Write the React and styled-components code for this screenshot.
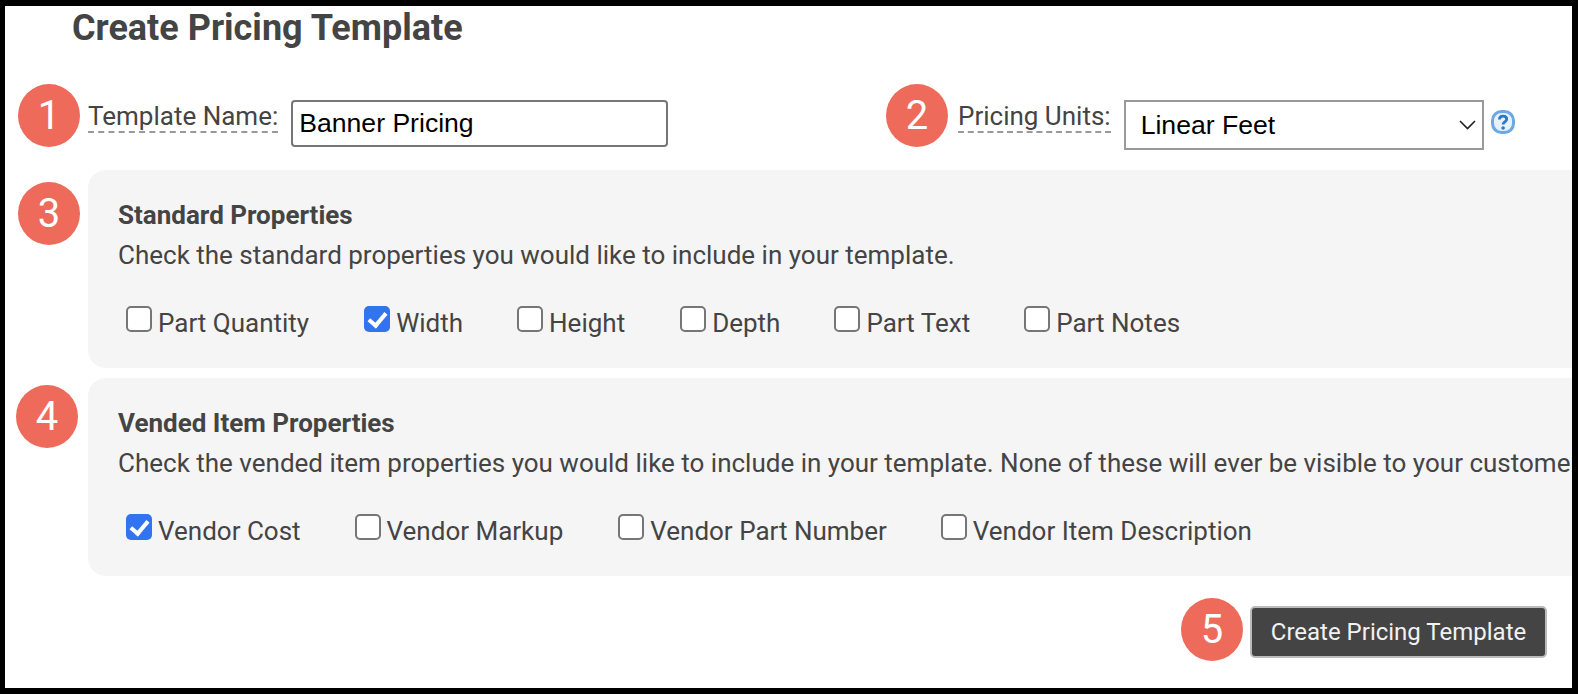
import React from 'react';
import styled, { createGlobalStyle } from 'styled-components';

const GlobalStyle = createGlobalStyle`
  html, body {
    margin: 0;
    height: 100%;
    background: #000;
  }
  body {
    font-family: Roboto, 'Liberation Sans', sans-serif;
    color: #444;
  }
`;

const Frame = styled.div`
  box-sizing: border-box;
  margin: 6px 6px 0 5px;
  height: 682px;
  background: #fff;
  overflow: hidden;
`;

const Title = styled.h1`
  margin: 0 0 0 67px;
  height: 78px;
  padding-top: 2px;
  box-sizing: border-box;
  font-size: 36px;
  line-height: 40px;
  font-weight: 700;
  color: #444;
`;

const Row = styled.div`
  display: flex;
  align-items: flex-start;
`;

const FieldRow = styled(Row)`
  height: 86px;
`;

const Field = styled.div`
  display: flex;
  align-items: flex-start;
  width: ${(p) => p.$width}px;
  padding-left: ${(p) => p.$indent}px;
`;

const Badge = styled.div`
  flex: none;
  width: 62px;
  height: 63px;
  border-radius: 50%;
  background: #ee6a5a;
  color: #fff;
  font-size: 40px;
  line-height: 63px;
  text-align: center;
  margin-left: ${(p) => p.$left || 0}px;
  margin-top: ${(p) => p.$top || 0}px;
`;

const FieldLabel = styled.label`
  flex: none;
  margin: 17px 13px 0 ${(p) => p.$gap}px;
  height: 30px;
  font-size: 26px;
  line-height: 30px;
  color: #444;
  border-bottom: 2px dashed #999;
`;

const NameInput = styled.input`
  box-sizing: border-box;
  width: 377px;
  height: 47px;
  margin-top: 16px;
  padding: 0 6px;
  border: 2px solid #767676;
  border-radius: 4px;
  background: #fff;
  color: #000;
  font-family: 'Liberation Sans', sans-serif;
  font-size: 26.6px;
  outline: none;
`;

const SelectWrap = styled.div`
  position: relative;
  flex: none;
  width: 360px;
  height: 50px;
  margin-top: 16px;
`;

const UnitSelect = styled.select`
  box-sizing: border-box;
  appearance: none;
  width: 100%;
  height: 100%;
  padding: 0 15px;
  border: 2px solid #999;
  border-radius: 0;
  background: #fff;
  color: #000;
  font-family: 'Liberation Sans', sans-serif;
  font-size: 26.6px;
`;

const Chevron = styled.svg`
  position: absolute;
  right: 8px;
  top: 20px;
  width: 17px;
  height: 10px;
  pointer-events: none;
`;

const HelpIcon = styled.svg`
  flex: none;
  width: 24px;
  height: 24px;
  margin: 26px 0 0 7px;
`;

const PanelRow = styled(Row)`
  margin-bottom: 10px;
`;

const Panel = styled.section`
  box-sizing: border-box;
  flex: none;
  width: 1600px;
  height: 198px;
  padding: 30px 30px 0;
  border-radius: 18px 0 0 18px;
  background: #f5f5f5;
  margin-left: ${(p) => p.$left}px;
`;

const PanelTitle = styled.h2`
  margin: 0;
  font-size: 26px;
  line-height: 30px;
  font-weight: 700;
  color: #444;
`;

const PanelText = styled.p`
  margin: 10px 0 0;
  font-size: 26px;
  line-height: 30px;
  white-space: nowrap;
  color: #444;
`;

const Checks = styled.div`
  display: flex;
  margin-top: 37px;
  margin-left: 8px;
`;

const CheckItem = styled.label`
  display: flex;
  align-items: flex-start;
  margin-right: ${(p) => p.$gap}px;
  font-size: 26px;
  line-height: 32px;
  color: #444;
`;

const CheckBox = styled.input.attrs({ type: 'checkbox' })`
  appearance: none;
  position: relative;
  box-sizing: border-box;
  flex: none;
  width: 26px;
  height: 26px;
  margin: -1px 6px 0 0;
  border: 2px solid #767676;
  border-radius: 5px;
  background: #fff;

  &:checked {
    border: none;
    background: #3273f0;
  }

  &:checked::after {
    content: '';
    position: absolute;
    left: 8px;
    top: 3px;
    width: 7px;
    height: 14px;
    border: solid #fff;
    border-width: 0 4px 4px 0;
    transform: rotate(40deg);
  }
`;

const Footer = styled(Row)`
  justify-content: flex-end;
  padding-right: 25px;
  margin-top: 22px;
`;

const SubmitButton = styled.button`
  box-sizing: border-box;
  width: 297px;
  height: 52px;
  margin: 8px 0 0 7px;
  border: 2px solid #bbb;
  border-radius: 5px;
  background: #444;
  color: #f2f2f2;
  font-family: Roboto, sans-serif;
  font-size: 24px;
`;

const standard = [
  { name: 'Part Quantity', gap: 55 },
  { name: 'Width', gap: 54, checked: true },
  { name: 'Height', gap: 55 },
  { name: 'Depth', gap: 54 },
  { name: 'Part Text', gap: 54 },
  { name: 'Part Notes', gap: 0 },
];

const vended = [
  { name: 'Vendor Cost', gap: 54, checked: true },
  { name: 'Vendor Markup', gap: 55 },
  { name: 'Vendor Part Number', gap: 54 },
  { name: 'Vendor Item Description', gap: 0 },
];

const CheckList = ({ items }) => (
  <Checks>
    {items.map((item) => (
      <CheckItem key={item.name} $gap={item.gap}>
        <CheckBox defaultChecked={item.checked} />
        {item.name}
      </CheckItem>
    ))}
  </Checks>
);

const App = () => {
  return (
    <>
      <GlobalStyle />
      <Frame>
        <Title>Create Pricing Template</Title>
        <FieldRow>
          <Field $width={868} $indent={13}>
            <Badge>1</Badge>
            <FieldLabel $gap={8}>Template Name:</FieldLabel>
            <NameInput defaultValue="Banner Pricing" />
          </Field>
          <Field $width={680} $indent={0}>
            <Badge>2</Badge>
            <FieldLabel $gap={10}>Pricing Units:</FieldLabel>
            <SelectWrap>
              <UnitSelect defaultValue="Linear Feet">
                <option>Linear Feet</option>
              </UnitSelect>
              <Chevron viewBox="0 0 17 10">
                <path d="M1 1l7.5 7.5L16 1" fill="none" stroke="#222" strokeWidth="1.6" />
              </Chevron>
            </SelectWrap>
            <HelpIcon viewBox="0 0 24 24">
              <rect x="1.5" y="1.5" width="21" height="21" rx="9" fill="#e6f1fb" stroke="#6ea8e0" strokeWidth="3" />
              <path d="M8.4 9.6c0-2.2 1.6-3.5 3.7-3.5s3.6 1.2 3.6 3.1c0 2.8-3.6 2.7-3.6 5.2" fill="none" stroke="#2b78c5" strokeWidth="2.8" />
              <circle cx="12.1" cy="18" r="1.8" fill="#2b78c5" />
            </HelpIcon>
          </Field>
        </FieldRow>
        <PanelRow>
          <Badge $left={13} $top={12}>3</Badge>
          <Panel $left={8}>
            <PanelTitle>Standard Properties</PanelTitle>
            <PanelText>Check the standard properties you would like to include in your template.</PanelText>
            <CheckList items={standard} />
          </Panel>
        </PanelRow>
        <PanelRow>
          <Badge $left={11} $top={7}>4</Badge>
          <Panel $left={10}>
            <PanelTitle>Vended Item Properties</PanelTitle>
            <PanelText>Check the vended item properties you would like to include in your template. None of these will ever be visible to your customers.</PanelText>
            <CheckList items={vended} />
          </Panel>
        </PanelRow>
        <Footer>
          <Badge>5</Badge>
          <SubmitButton>Create Pricing Template</SubmitButton>
        </Footer>
      </Frame>
    </>
  );
};

export default App;
